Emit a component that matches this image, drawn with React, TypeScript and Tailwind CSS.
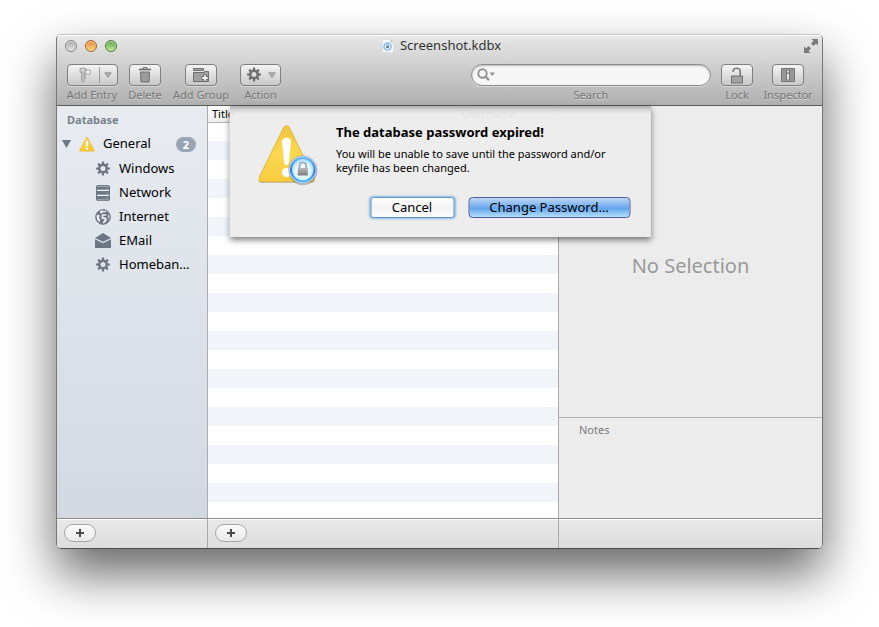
import type { ReactNode } from "react";

const toolButton =
  "flex h-[22px] items-center justify-center rounded-[4px] border border-[#7f7f7f] bg-linear-to-b from-[#f4f4f4] to-[#c9c9c9] text-[#6f6f6f] shadow-[0_1px_0_#ffffff66]";

const toolLabel = "text-[11px] leading-[14px] whitespace-nowrap text-[#757575] [text-shadow:0_1px_0_#ffffff66]";

function ToolItem({ id, label, width, children }: { id: string; label: string; width: string; children: ReactNode }) {
  return (
    <div className={`flex flex-col items-center gap-[2px] ${width}`}>
      {children}
      <span id={id} className={toolLabel}>
        {label}
      </span>
    </div>
  );
}

function Gear({ size }: { size: number }) {
  return (
    <svg width={size} height={size} viewBox="0 0 16 16" fill="none" stroke="currentColor" aria-hidden="true">
      <circle cx="8" cy="7.500" r="3.800" strokeWidth="2.600" />
      <path
        strokeWidth="2.200"
        d="M8 .5v3M8 11.500v3M1 7.500h3M12 7.500h3M3.100 2.600l2 2M10.900 10.400l2 2M3.100 12.400l2-2M10.900 4.600l2-2"
      />
    </svg>
  );
}

function Caret() {
  return (
    <svg width="8" height="6" viewBox="0 0 8 6" aria-hidden="true">
      <path d="M.8.8h6.4L4 5.3z" fill="#b4b4b4" stroke="#858585" strokeWidth=".8" />
    </svg>
  );
}

function KeyIcon() {
  return (
    <svg width="14" height="16" viewBox="0 0 14 16" aria-hidden="true">
      <path
        d="M2 1.300h5.500v4.200H6v1.500h1.500v1.500H6V10h1.500v1.500H6v2.700l-1 1-1.500-1V5.500H2z"
        fill="#c0c0c0"
        stroke="#a0a0a0"
        strokeWidth=".9"
      />
      <path d="M3.500 3h2.500" stroke="#f4f4f4" />
      <path d="M10 2v6M7 5h6" stroke="#9c9c9c" strokeWidth="3.200" />
      <path d="M10 2.500v5M7.500 5h5" stroke="#f2f2f2" strokeWidth="1.600" />
    </svg>
  );
}

function TrashIcon() {
  return (
    <svg width="14" height="16" viewBox="0 0 14 16" aria-hidden="true">
      <path d="M5 2V.7h4V2" fill="none" stroke="#6d6d6d" />
      <path d="M1 2.500h12" stroke="#666" strokeWidth="1.600" />
      <path d="M2.500 5h9l-.5 10h-8z" fill="#9b9b9b" stroke="#707070" />
    </svg>
  );
}

function FolderPlusIcon() {
  return (
    <svg width="18" height="16" viewBox="0 0 18 16" aria-hidden="true">
      <path d="M1.500 1.500h10v2h-10z" fill="#a5a5a5" stroke="#6f6f6f" />
      <path d="M1.500 5.500h11V4.500h4v10h-15z" fill="#a0a0a0" stroke="#707070" />
      <path d="M13 7.500v7M9.500 11h7" stroke="#6a6a6a" strokeWidth="3.400" />
      <path d="M13 8.300v5.400M10.300 11h5.400" stroke="#f4f4f4" strokeWidth="1.800" />
    </svg>
  );
}

function UnlockIcon() {
  return (
    <svg width="14" height="17" viewBox="0 0 14 17" aria-hidden="true">
      <path d="M3.200 5V4.400c0-4.200 7-4.200 7 0V9" fill="none" stroke="#7b7b7b" strokeWidth="1.700" />
      <path d="M1.500 9h11v7h-11z" fill="#a2a2a2" stroke="#707070" />
    </svg>
  );
}

function InfoIcon() {
  return (
    <svg width="14" height="14" viewBox="0 0 14 14" aria-hidden="true">
      <path d="M.5.500h13v13H.5z" fill="#979797" stroke="#757575" />
      <path d="M7 2v10" stroke="#737373" strokeWidth="3.800" />
      <path d="M7 2.700v1.800M7 5.700v5.800" stroke="#eee" strokeWidth="1.900" />
    </svg>
  );
}

function DocumentIcon() {
  return (
    <svg width="12" height="14" viewBox="0 0 12 14" aria-hidden="true">
      <path d="M.5.500h8l3 3v10H.5z" fill="#f7f9fb" stroke="#d6d9dc" strokeWidth=".6" />
      <path d="M8.500.500v3h3z" fill="#b9bdc0" />
      <circle cx="5.600" cy="7.500" r="3.600" fill="#dcefff" stroke="#7ab8f0" strokeWidth="1.300" />
      <path d="M4.400 7h2.400v2.100H4.400z" fill="#666d75" />
      <path d="M4.800 7V6c0-1 1.600-1 1.600 0v1" fill="none" stroke="#7d858d" strokeWidth=".7" />
    </svg>
  );
}

function FullscreenIcon() {
  return (
    <svg width="14" height="14" viewBox="0 0 14 14" fill="#7a7a7a" aria-hidden="true">
      <path d="M7.500 0H14v6.500l-2-2L9.500 7 7 4.500 9.500 2z" />
      <path d="M0 7.500l2 2L4.500 7 7 9.500 4.500 12l2 2H0z" />
    </svg>
  );
}

function SmallWarning() {
  return (
    <svg width="16" height="16" viewBox="0 0 16 16" aria-hidden="true">
      <defs>
        <linearGradient id="smallYellow" x1="0" y1="0" x2="0" y2="1">
          <stop offset="0" stopColor="#ffe16b" />
          <stop offset="1" stopColor="#f9c52c" />
        </linearGradient>
      </defs>
      <path d="M8 1L15.400 15H.6z" fill="url(#smallYellow)" stroke="#ecbc3c" strokeLinejoin="round" />
      <path d="M8 5v5.200M8 11.600v1.900" stroke="#fff" strokeWidth="1.900" />
    </svg>
  );
}

function LargeWarning() {
  return (
    <svg width="60" height="64" viewBox="0 0 60 64" className="shrink-0" aria-hidden="true">
      <defs>
        <linearGradient id="largeYellow" x1="0" y1="0" x2="0" y2="1">
          <stop offset="0" stopColor="#f0c440" />
          <stop offset=".5" stopColor="#fbd850" />
          <stop offset="1" stopColor="#f8cb3e" />
        </linearGradient>
        <linearGradient id="ring" x1="0" y1="0" x2="0" y2="1">
          <stop offset="0" stopColor="#6cb6f4" />
          <stop offset=".55" stopColor="#2d7de4" />
          <stop offset="1" stopColor="#4fb4f8" />
        </linearGradient>
        <radialGradient id="glass" cx=".5" cy=".55" r=".55">
          <stop offset="0" stopColor="#ffffff" />
          <stop offset=".6" stopColor="#dcf5ff" />
          <stop offset="1" stopColor="#8fd3fb" />
        </radialGradient>
        <linearGradient id="metal" x1="0" y1="0" x2="0" y2="1">
          <stop offset="0" stopColor="#b9b9b9" />
          <stop offset="1" stopColor="#7c7c7c" />
        </linearGradient>
      </defs>
      <path
        d="M25 4.500c1.200-2.500 4.800-2.500 6 0L56 55c1 2-.3 4-2.500 4H3c-2.400 0-3.800-2-2.800-4z"
        fill="#8a7a40"
        opacity=".35"
      />
      <path
        d="M25 3.500c1.200-2.500 4.800-2.500 6 0L55.500 54c1 2-.3 3.800-2.500 3.800H3c-2.400 0-3.700-1.800-2.700-3.800z"
        fill="url(#largeYellow)"
        stroke="#d7aa32"
        strokeWidth=".7"
      />
      <path d="M23.500 18c0-5.800 9-5.800 9 0l-2.200 20.500c-.4 3.500-4.200 3.500-4.600 0z" fill="#fff" />
      <circle cx="28" cy="48.500" r="4.600" fill="#fff" />
      <circle cx="44.400" cy="46.800" r="14.400" fill="#555" opacity=".35" />
      <circle cx="44.300" cy="45.600" r="13.900" fill="#e6f2fc" stroke="#8b9cad" strokeWidth=".7" />
      <circle cx="44.300" cy="45.600" r="11.800" fill="url(#glass)" stroke="url(#ring)" strokeWidth="2.200" />
      <path d="M41 44v-2.300c0-4.300 6.600-4.300 6.600 0V44" fill="none" stroke="#a2a8ad" strokeWidth="1.700" />
      <path d="M39.300 44h10v7.500h-10z" fill="url(#metal)" />
    </svg>
  );
}

function ServerIcon() {
  return (
    <svg width="16" height="16" viewBox="0 0 16 16" aria-hidden="true">
      <rect x="1" width="14" height="16" rx="2" fill="#6c7785" />
      <path d="M2 5.300h12M2 10.300h12" stroke="#f3f5f8" strokeWidth="1.200" />
      <path d="M2.500 1.300h11M2.500 14.800h11" stroke="#c5cbd3" strokeWidth=".7" />
      <path d="M11.500 3.300h1.200M11.500 8h1.200M11.500 12.800h1.200" stroke="#aab3bd" />
    </svg>
  );
}

function GlobeIcon() {
  return (
    <svg width="16" height="16" viewBox="0 0 16 16" aria-hidden="true">
      <circle cx="8" cy="8" r="7.300" fill="#6c7785" stroke="#6c7785" />
      <path d="M4.500 2.300l2.800-1 1.500.8 3-.2-.8 1.200-3.500.3-1.500 1.300z" fill="#e9edf2" />
      <path d="M1.300 6.800L3.500 5.500l1.300 1.200-.8 2 1.300 2.300-.6 2.200-2.400-2.200z" fill="#e9edf2" />
      <path d="M6.700 5.300h4.600v1.500H8.300v1.500h2l1.700 1.700-.6 2.300-2.600 2.200-1-.5.500-1.800 1.400-1.200-.6-1.100H6.500z" fill="#e9edf2" />
      <path d="M13.200 4.500l1.500 3-.8 3-1-2z" fill="#c9cfd7" />
    </svg>
  );
}

function MailIcon() {
  return (
    <svg width="16" height="16" viewBox="0 0 16 16" aria-hidden="true">
      <path d="M0 5L8 0l8 5-8 3.700z" fill="#6c7785" />
      <path d="M0 6.300l8 4 8-4V15H0z" fill="#6c7785" />
    </svg>
  );
}

const groups: { name: string; icon: ReactNode }[] = [
  { name: "Windows", icon: <Gear size={16} /> },
  { name: "Network", icon: <ServerIcon /> },
  { name: "Internet", icon: <GlobeIcon /> },
  { name: "EMail", icon: <MailIcon /> },
  { name: "Homeban…", icon: <Gear size={16} /> },
];

const lights = [
  { name: "Close", color: "border-[#858585] bg-linear-to-b from-[#a9a9a9] to-[#e4e4e4]" },
  { name: "Minimize", color: "border-[#a4622b] bg-linear-to-b from-[#e0832c] to-[#ffdf86]" },
  { name: "Zoom", color: "border-[#4c7c38] bg-linear-to-b from-[#59a23f] to-[#c3ee9c]" },
];

function PlusButton({ label }: { label: string }) {
  return (
    <button
      aria-label={label}
      className="flex h-[18px] w-8 items-center justify-center rounded-full border border-[#a6a6a6] bg-linear-to-b from-[#fbfbfb] to-[#e9e9e9]"
    >
      <svg width="8" height="8" viewBox="0 0 8 8" aria-hidden="true">
        <path d="M4 0v8M0 4h8" stroke="#4a4a4a" strokeWidth="2" />
      </svg>
    </button>
  );
}

function TitleBar() {
  return (
    <div className="grid grid-cols-[1fr_auto_1fr] items-center pr-1 pl-2">
      <div className="flex gap-2">
        {lights.map((light) => (
          <button
            key={light.name}
            aria-label={light.name}
            className={`size-3 rounded-full border shadow-[inset_0_1px_1px_#ffffffaa] ${light.color}`}
          />
        ))}
      </div>
      <h1 className="flex h-[22px] items-center gap-[6px] text-[13px] text-[#333]">
        <DocumentIcon />
        Screenshot.kdbx
      </h1>
      <button aria-label="Enter full screen" className="justify-self-end">
        <FullscreenIcon />
      </button>
    </div>
  );
}

function Toolbar() {
  return (
    <div className="flex items-start gap-[10px] px-[9px] pt-[7px]">
      <ToolItem id="add-entry" label="Add Entry" width="w-[52px]">
        <button aria-labelledby="add-entry" className={`${toolButton} w-[51px]`}>
          <span className="flex flex-1 justify-center pl-1">
            <KeyIcon />
          </span>
          <span className="flex h-4 w-[18px] items-center justify-center border-l border-[#9b9b9b]">
            <Caret />
          </span>
        </button>
      </ToolItem>
      <ToolItem id="delete" label="Delete" width="w-[34px]">
        <button aria-labelledby="delete" className={`${toolButton} w-8`}>
          <TrashIcon />
        </button>
      </ToolItem>
      <ToolItem id="add-group" label="Add Group" width="w-[58px]">
        <button aria-labelledby="add-group" className={`${toolButton} w-8`}>
          <FolderPlusIcon />
        </button>
      </ToolItem>
      <ToolItem id="action" label="Action" width="w-[41px]">
        <button aria-labelledby="action" className={`${toolButton} w-full gap-[6px]`}>
          <Gear size={16} />
          <Caret />
        </button>
      </ToolItem>
      <div className="ml-auto flex w-60 flex-col items-center gap-[2px]">
        <div className="flex h-[22px] w-full items-center gap-1 rounded-full border border-[#8d8d8d] bg-[#f7f7f7] pr-3 pl-[5px] shadow-[inset_0_1px_2px_#00000040,0_1px_0_#ffffff66]">
          <svg width="18" height="14" viewBox="0 0 18 14" className="shrink-0" aria-hidden="true">
            <circle cx="5.500" cy="5.500" r="4.200" fill="none" stroke="#949494" strokeWidth="2" />
            <path d="M8.500 8.500l3.500 3.700" stroke="#949494" strokeWidth="2.400" />
            <path d="M12.500 4.500h5.500L15.200 8z" fill="#949494" />
          </svg>
          <input id="search" type="search" className="h-full w-full bg-transparent text-[13px] outline-none" />
        </div>
        <label htmlFor="search" className={toolLabel}>
          Search
        </label>
      </div>
      <ToolItem id="lock" label="Lock" width="w-8">
        <button aria-labelledby="lock" className={`${toolButton} w-full`}>
          <UnlockIcon />
        </button>
      </ToolItem>
      <ToolItem id="inspector" label="Inspector" width="w-[50px]">
        <button aria-labelledby="inspector" className={`${toolButton} w-8`}>
          <InfoIcon />
        </button>
      </ToolItem>
    </div>
  );
}

function Sidebar() {
  return (
    <nav className="w-[151px] shrink-0 border-r border-[#a9adb2] bg-linear-to-b from-[#e8ecf1] to-[#d2d9e2] pt-[5px] text-[13px] text-black">
      <h2 className="pl-[10px] text-[11px] leading-[18px] font-bold text-[#78838f]">Database</h2>
      <ul>
        <li>
          <div className="flex h-7 items-center pt-[2px] pr-[11px] pl-[5px]">
            <button aria-label="Collapse General">
              <svg width="9" height="8" viewBox="0 0 9 8" aria-hidden="true">
                <path d="M0 0h9L4.500 8z" fill="#6c7785" />
              </svg>
            </button>
            <span className="mr-2 ml-[8px]">
              <SmallWarning />
            </span>
            General
            <span className="ml-auto w-5 rounded-full bg-[#97a5b4] text-center text-[11px] leading-[15px] font-bold text-white">
              2
            </span>
          </div>
          <ul>
            {groups.map((group) => (
              <li key={group.name} className="flex h-6 items-center gap-2 pl-[38px]">
                <span className="text-[#6c7785]">{group.icon}</span>
                {group.name}
              </li>
            ))}
          </ul>
        </li>
      </ul>
    </nav>
  );
}

function EntryTable() {
  return (
    <div className="h-full min-w-0 flex-1 overflow-hidden bg-white">
      <table className="w-full table-fixed border-collapse text-left text-[11px] text-black">
        <thead className="bg-linear-to-b from-white to-[#eee]">
          <tr className="h-4 border-b border-[#b5b5b5] leading-[15px]">
            <th className="w-[250px] p-0 pl-1 font-normal">Title</th>
            <th className="p-0 pl-1 font-normal">Username</th>
          </tr>
        </thead>
        <tbody>
          {Array.from({ length: 21 }, (_, row) => (
            <tr key={row} className="h-[19px] even:bg-[#f1f5fa]">
              <td />
              <td />
            </tr>
          ))}
        </tbody>
      </table>
    </div>
  );
}

function Inspector() {
  return (
    <aside className="flex w-[264px] shrink-0 flex-col border-l border-[#a9a9a9] bg-[#ececec]">
      <div className="flex flex-1 items-center justify-center pt-2 text-xl text-[#999]">No Selection</div>
      <section className="h-[101px] border-t border-[#b0b0b0] px-5 pt-[5px]">
        <h2 className="text-[11px] leading-[14px] text-[#7b7b7b]">Notes</h2>
      </section>
    </aside>
  );
}

function ExpiredSheet() {
  return (
    <div
      role="alertdialog"
      aria-labelledby="sheet-title"
      aria-describedby="sheet-text"
      className="absolute top-0 left-1/2 flex w-[421px] -translate-x-1/2 gap-[18px] bg-[#ececec]/96 pt-[18px] pr-5 pb-[19px] pl-[29px] text-black shadow-[0_3px_6px_#00000080,inset_0_7px_6px_-5px_#00000059]"
    >
      <LargeWarning />
      <div className="flex-1">
        <h2 id="sheet-title" className="text-[13px] leading-4 font-bold">
          The database password expired!
        </h2>
        <p id="sheet-text" className="mt-[7px] text-[11px] leading-[14px]">
          You will be unable to save until the password and/or
          <br />
          keyfile has been changed.
        </p>
        <div className="mt-[22px] flex justify-end gap-[14px] text-[13px]">
          <button className="h-[21px] w-[84px] rounded-[3px] border border-[#5e93cb] bg-linear-to-b from-white via-[#f3f3f3] to-white leading-[17px] shadow-[0_0_2px_1px_#8bb9e6]">
            Cancel
          </button>
          <button className="h-[21px] w-[162px] rounded-[4px] border border-[#545a9e] bg-linear-to-b from-[#bdd7f5] from-0% via-[#64a6ec] via-55% to-[#b3e0fb] to-100% leading-[17px]">
            Change Password…
          </button>
        </div>
      </div>
    </div>
  );
}

export default function App() {
  return (
    <div className="flex min-h-screen flex-col bg-white px-14 pt-[34px] pb-[78px] font-['Noto_Sans','Lucida_Grande',sans-serif]">
      <main className="flex flex-1 flex-col overflow-hidden rounded-[5px] border border-[#777] border-t-[#c4c4c4] border-b-[#4d4d4d] shadow-[0_25px_50px_#00000099]">
        <header className="h-[71px] border-b border-[#5a5a5a] bg-linear-to-b from-[#e8e8e8] to-[#b0b0b0] shadow-[inset_0_1px_0_#fff]">
          <TitleBar />
          <Toolbar />
        </header>
        <div className="relative flex flex-1">
          <Sidebar />
          <div className="flex min-w-0 flex-1 flex-col">
            <div className="h-0 flex-auto overflow-hidden">
              <EntryTable />
            </div>
          </div>
          <Inspector />
          <ExpiredSheet />
        </div>
        <footer className="flex h-[30px] border-t border-[#8d8d8d] bg-linear-to-b from-[#e9e9e9] to-[#dddddd] shadow-[inset_0_1px_0_#fff]">
          <div className="flex w-[151px] items-center border-r border-[#a9a9a9] pb-[2px] pl-[7px]">
            <PlusButton label="Add group" />
          </div>
          <div className="flex flex-1 items-center pb-[2px] pl-[7px]">
            <PlusButton label="Add entry" />
          </div>
          <div className="w-[264px] border-l border-[#a9a9a9]" />
        </footer>
      </main>
    </div>
  );
}
